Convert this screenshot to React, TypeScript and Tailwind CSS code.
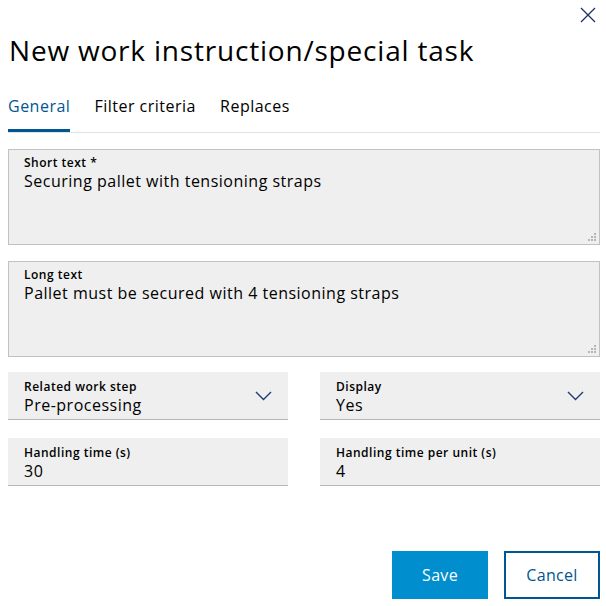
import { useState } from "react";

const tabs = ["General", "Filter criteria", "Replaces"];

function ResizeGrip() {
    return (
        <svg className="absolute right-[3px] bottom-[3px]" width="8" height="8" viewBox="0 0 8 8">
            <rect x="6" y="0" width="2" height="2" fill="#b5b5b5" />
            <rect x="3" y="3" width="2" height="2" fill="#b5b5b5" />
            <rect x="6" y="3" width="2" height="2" fill="#b5b5b5" />
            <rect x="0" y="6" width="2" height="2" fill="#b5b5b5" />
            <rect x="3" y="6" width="2" height="2" fill="#b5b5b5" />
            <rect x="6" y="6" width="2" height="2" fill="#b5b5b5" />
        </svg>
    );
}

function TextAreaField({ label, value }: { label: string; value: string }) {
    return (
        <div className="relative h-[96px] bg-[#efefef] border border-[#c1c1c1] pl-[15px] pt-[5px]">
            <div className="text-[12px] font-semibold leading-[16px] tracking-[0.5px] text-[#000]">{label}</div>
            <div className="text-[16px] leading-[20px] tracking-[0.5px] text-[#000]">{value}</div>
            <ResizeGrip />
        </div>
    );
}

function Chevron() {
    return (
        <svg width="17" height="10" viewBox="0 0 17 10" fill="none">
            <path d="M1 1 L8.5 8.5 L16 1" stroke="#1c3f73" strokeWidth="1.4" />
        </svg>
    );
}

function Field({ label, value, select }: { label: string; value: string; select?: boolean }) {
    return (
        <div className="flex h-[48px] items-center justify-between bg-[#efefef] border-b border-[#b7b7b7] pl-[16px] pr-[16px]">
            <div className="flex flex-col pt-[2px]">
                <span className="text-[12px] font-semibold leading-[16px] tracking-[0.5px] text-[#000]">{label}</span>
                <span className="text-[16px] leading-[20px] tracking-[0.5px] text-[#000]">{value}</span>
            </div>
            {select && <Chevron />}
        </div>
    );
}

export default function App() {
    const [active, setActive] = useState(0);

    return (
        <div className="w-[606px] h-[606px] bg-white pl-2 pr-[6px] pt-[7px] font-['Open_Sans',sans-serif] text-black">
            {/* Close */}
            <div className="flex justify-end pr-[4px]">
                <svg width="16" height="16" viewBox="0 0 16 16">
                    <path d="M1 1 L15 15 M15 1 L1 15" stroke="#1d2f6b" strokeWidth="1.3" />
                </svg>
            </div>

            <h1 className="mt-[10px] text-[28px] leading-[34px] font-normal tracking-[0.8px] pl-[1px]">
                New work instruction/special task
            </h1>

            {/* Tabs */}
            <div className="mt-[28px] flex border-b border-[#e2e2e2]">
                {tabs.map((t, i) => (
                    <button
                        key={t}
                        onClick={() => setActive(i)}
                        className={
                            i === active
                                ? "mr-[24px] pb-[12px] text-[16px] leading-[22px] tracking-[0.5px] text-[#005691] border-b-[3px] border-[#005691]"
                                : "mr-[24px] pb-[12px] text-[16px] leading-[22px] tracking-[0.5px] text-[#000] border-b-[3px] border-transparent"
                        }
                    >
                        {t}
                    </button>
                ))}
            </div>

            <div className="mt-[16px] flex flex-col gap-[16px]">
                <TextAreaField label="Short text *" value="Securing pallet with tensioning straps" />
                <TextAreaField label="Long text" value="Pallet must be secured with 4 tensioning straps" />
            </div>

            <div className="mt-[15px] grid grid-cols-2 gap-x-[32px] gap-y-[18px]">
                <Field label="Related work step" value="Pre-processing" select />
                <Field label="Display" value="Yes" select />
                <Field label="Handling time (s)" value="30" />
                <Field label="Handling time per unit (s)" value="4" />
            </div>

            <div className="mt-[65px] flex justify-end gap-[16px]">
                <button className="w-[96px] h-[48px] bg-[#008ecf] text-white text-[16px] tracking-[0.3px]">Save</button>
                <button className="w-[96px] h-[48px] border-2 border-[#005691] text-[#005691] text-[16px] tracking-[0.3px]">Cancel</button>
            </div>
        </div>
    );
}
